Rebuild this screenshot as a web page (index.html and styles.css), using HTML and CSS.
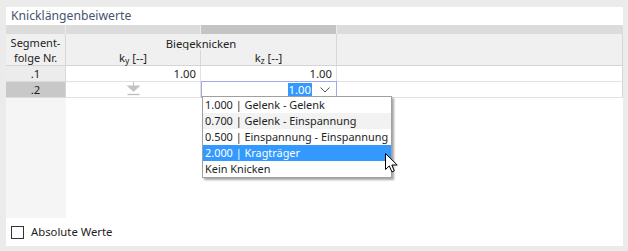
FILE: index.html
```html
<!DOCTYPE html>
<html>
<head>
<meta charset="utf-8">
<link rel="stylesheet" href="styles.css">
</head>
<body>
<div class="panel">
  <div class="title">Knicklängenbeiwerte</div>
  <div class="grid">
    <div class="band b1"></div>
    <div class="band b2"></div>
    <div class="band b3"></div>
    <div class="band b4"></div>

    <div class="hd h-seg">Segment-<br>folge Nr.</div>
    <div class="hd h-group">Biegeknicken</div>
    <div class="hd h-ky"><span>k<span class="sub">y</span>&nbsp;[--]</span></div>
    <div class="hd h-kz"><span>k<span class="sub">z</span>&nbsp;[--]</span></div>
    <div class="hd h-rest"></div>

    <div class="rh r1">.1</div>
    <div class="cell c2 r1">1.00</div>
    <div class="cell c3 r1">1.00</div>
    <div class="cell c4 r1"></div>

    <div class="rh sel r2">.2</div>
    <div class="cell c2 r2 icon-cell">
      <svg class="fill-icon" width="15" height="15" viewBox="0 0 15 15"><path d="M7.5 0v4" stroke="#bdbdbd" stroke-width="1"/><path d="M0.5 3.5h14l-7 6.5z" fill="#c4c4c4"/><path d="M1.5 12.5h12" stroke="#bdbdbd" stroke-width="1.3"/></svg>
    </div>
    <div class="cell c3 r2 editor"><span class="selval">1.00</span><svg class="chev" width="10" height="6" viewBox="0 0 10 6"><path d="M0.5 0.5l4.5 4.5 4.5-4.5" fill="none" stroke="#555" stroke-width="1"/></svg></div>
    <div class="cell c4 r2"></div>

    <div class="fill f1"></div>
    <div class="fill f2"></div>

    <div class="dropdown">
      <div class="item">1.000 | Gelenk - Gelenk</div>
      <div class="item hover">0.700 | Gelenk - Einspannung</div>
      <div class="item">0.500 | Einspannung - Einspannung</div>
      <div class="item active">2.000 | Kragträger</div>
      <div class="item">Kein Knicken</div>
    </div>
    <svg class="cursor" width="13" height="20" viewBox="0 0 13 20"><path d="M0.5 0.5v16l3.8-3.6 2.6 6 2.4-1-2.5-5.9h5.4z" fill="#fff" stroke="#000" stroke-width="1" stroke-linejoin="round"/></svg>
  </div>
  <div class="footer">
    <span class="check"></span>
    <span class="label">Absolute Werte</span>
  </div>
</div>
</body>
</html>
```
FILE: styles.css
```css
html, body {
  margin: 0;
  padding: 0;
}
body {
  background: #ebebeb;
  font-family: "Noto Sans", "Open Sans", sans-serif;
  font-size: 11.3px;
  color: #1e1e1e;
  width: 628px;
  height: 251px;
  overflow: hidden;
}
.panel {
  margin: 7px 0 0 6px;
  width: 617px;
  height: 239px;
  background: #fff;
  display: flex;
  flex-direction: column;
}
.title {
  height: 18px;
  line-height: 17px;
  padding-left: 5px;
  color: #47536f;
  font-size: 12.2px;
}
.grid {
  position: relative;
  display: grid;
  grid-template-columns: 60px 135px 136px 286px;
  grid-template-rows: 9px 16px 16px 16px 16px 1fr;
  height: 193px;
}
.band {
  background: #dcdcdc;
  border-right: 1px solid #ececec;
  grid-row: 1;
}
.b1 { grid-column: 1; }
.b2 { grid-column: 2; }
.b3 { grid-column: 3; background: #c4c4c4; }
.b4 { grid-column: 4; border-right: none; }

.hd {
  background: #f0f0f0;
  display: flex;
  align-items: center;
  justify-content: center;
  text-align: center;
}
.h-seg {
  grid-column: 1;
  grid-row: 2 / 4;
  line-height: 15px;
  border-right: 1px solid #d8d8d8;
  border-bottom: 1px solid #d4d4d4;
  padding-top: 1px;
  font-size: 11px;
}
.h-group {
  grid-column: 2 / 4;
  grid-row: 2;
  border-right: 1px solid #d8d8d8;
  padding-top: 2px;
}
.h-ky {
  grid-column: 2;
  grid-row: 3;
  border-right: 1px solid #d8d8d8;
  border-bottom: 1px solid #d4d4d4;
}
.h-kz {
  grid-column: 3;
  grid-row: 3;
  border-right: 1px solid #d8d8d8;
  border-bottom: 1px solid #d4d4d4;
}
.h-rest {
  grid-column: 4;
  grid-row: 2 / 4;
  border-right: 1px solid #d8d8d8;
  border-bottom: 1px solid #d4d4d4;
}
.sub {
  font-size: 8.5px;
  position: relative;
  top: 2px;
}
.rh {
  grid-column: 1;
  background: #ececec;
  border-right: 1px solid #d8d8d8;
  border-bottom: 1px solid #dcdcdc;
  display: flex;
  align-items: center;
  justify-content: center;
}
.rh.sel { background: #c8c8c8; }
.r1 { grid-row: 4; }
.r2 { grid-row: 5; }
.cell {
  border-right: 1px solid #e2e2e2;
  border-bottom: 1px solid #e2e2e2;
  display: flex;
  align-items: center;
  justify-content: flex-end;
  padding-right: 4px;
  overflow: hidden;
}
.c2 { grid-column: 2; }
.c3 { grid-column: 3; }
.c4 { grid-column: 4; border-right: 1px solid #d8d8d8; }
.icon-cell {
  justify-content: center;
  align-items: flex-start;
  padding-right: 0;
  padding-left: 1px;
}
.fill-icon {
  flex-shrink: 0;
  display: block;
}
.editor {
  border: 1px solid #a3a8e8;
  padding-right: 5px;
  margin-top: -1px;
  overflow: visible;
}
.selval {
  background: #3399ff;
  color: #fff;
  padding: 0 1px;
  line-height: 14px;
}
.chev {
  margin-left: 8px;
  margin-right: 1px;
}
.fill { grid-row: 6; }
.f1 { grid-column: 1; background: #f5f5f5; }
.f2 { grid-column: 2 / 5; background: #fff; }

.dropdown {
  position: absolute;
  left: 196px;
  top: 71px;
  width: 188px;
  border: 1px solid #a0a0a0;
  background: #fff;
  box-shadow: 2px 2px 2px rgba(0,0,0,0.35);
  font-size: 10.9px;
}
.item {
  height: 16px;
  line-height: 16px;
  padding-left: 2px;
  white-space: nowrap;
}
.item.hover { background: #f2f2f2; }
.item.active { background: #3399ff; color: #fff; }
.cursor {
  position: absolute;
  left: 379px;
  top: 128px;
}
.footer {
  display: flex;
  align-items: center;
  height: 28px;
  padding-left: 5px;
}
.check {
  width: 11px;
  height: 11px;
  border: 1px solid #333;
  background: #fff;
  margin-right: 7px;
  margin-top: 1px;
}
.label { line-height: 16px; }
```
